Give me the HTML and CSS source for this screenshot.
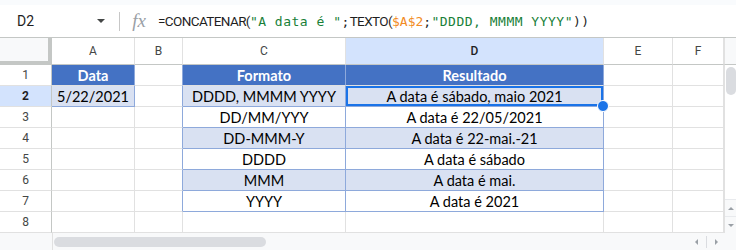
FILE: index.html
```html
<!DOCTYPE html>
<html lang="pt">

<head>
    <meta charset="UTF-8">
    <title>Planilha</title>
    <link rel="stylesheet" href="styles.css">
</head>

<body>
    <div class="topstrip"></div>
    <div class="fbar">
        <div class="namebox">
            <span>D2</span>
            <span class="caret"></span>
        </div>
        <div class="sep"></div>
        <div class="fx">fx</div>
        <div class="formula"><span class="fn">=CONCATENAR(</span><span class="str">"A data é "</span><span class="p">;</span><span class="fn">TEXTO(</span><span class="ref">$A$2</span><span class="p">;</span><span class="str">"DDDD, MMMM YYYY"</span><span class="p">))</span></div>
    </div>

    <div class="sheet">
        <!-- cabeçalho das colunas -->
        <div class="corner"></div>
        <div class="ch">A</div>
        <div class="ch">B</div>
        <div class="ch">C</div>
        <div class="ch ch-sel">D</div>
        <div class="ch">E</div>
        <div class="ch">F</div>
        <div class="vs-top"></div>

        <!-- barra de rolagem vertical -->
        <div class="vscroll">
            <div class="vthumb"></div>
            <div class="vbtn"><span class="tri up"></span></div>
            <div class="vbtn"><span class="tri down"></span></div>
        </div>

        <!-- linha 1 -->
        <div class="rh">1</div>
        <div class="c th tb-r">Data</div>
        <div class="c tb-r"></div>
        <div class="c th tb-r">Formato</div>
        <div class="c th tb-r">Resultado</div>
        <div class="c"></div>
        <div class="c"></div>

        <!-- linha 2 -->
        <div class="rh rh-sel">2</div>
        <div class="c alt tb-r tb-b">5/22/2021</div>
        <div class="c tb-r"></div>
        <div class="c alt tb-r tb-b">DDDD, MMMM YYYY</div>
        <div class="c alt tb-r tb-b sel">A data é sábado, maio 2021<span class="handle"></span></div>
        <div class="c"></div>
        <div class="c"></div>

        <!-- linha 3 -->
        <div class="rh">3</div>
        <div class="c"></div>
        <div class="c tb-r"></div>
        <div class="c tb-r tb-b">DD/MM/YYY</div>
        <div class="c tb-r tb-b">A data é 22/05/2021</div>
        <div class="c"></div>
        <div class="c"></div>

        <!-- linha 4 -->
        <div class="rh">4</div>
        <div class="c"></div>
        <div class="c tb-r"></div>
        <div class="c alt tb-r tb-b">DD-MMM-Y</div>
        <div class="c alt tb-r tb-b">A data é 22-mai.-21</div>
        <div class="c"></div>
        <div class="c"></div>

        <!-- linha 5 -->
        <div class="rh">5</div>
        <div class="c"></div>
        <div class="c tb-r"></div>
        <div class="c tb-r tb-b">DDDD</div>
        <div class="c tb-r tb-b">A data é sábado</div>
        <div class="c"></div>
        <div class="c"></div>

        <!-- linha 6 -->
        <div class="rh">6</div>
        <div class="c"></div>
        <div class="c tb-r"></div>
        <div class="c alt tb-r tb-b">MMM</div>
        <div class="c alt tb-r tb-b">A data é mai.</div>
        <div class="c"></div>
        <div class="c"></div>

        <!-- linha 7 -->
        <div class="rh">7</div>
        <div class="c"></div>
        <div class="c tb-r"></div>
        <div class="c tb-r tb-b">YYYY</div>
        <div class="c tb-r tb-b">A data é 2021</div>
        <div class="c"></div>
        <div class="c"></div>

        <!-- linha 8 -->
        <div class="rh">8</div>
        <div class="c"></div>
        <div class="c"></div>
        <div class="c"></div>
        <div class="c"></div>
        <div class="c"></div>
        <div class="c"></div>
    </div>

    <div class="hbar">
        <div class="hleft"></div>
        <div class="htrack"><div class="hthumb"></div></div>
        <div class="harrows">
            <div class="hbtn"><span class="tri left"></span></div>
            <div class="hbtn"><span class="tri right"></span></div>
        </div>
    </div>
</body>

</html>
```

FILE: styles.css
```css
body {
    margin: 0;
    width: 736px;
    height: 250px;
    overflow: hidden;
    background: #fff;
    font-family: Roboto, "Liberation Sans", sans-serif;
}

.topstrip {
    height: 5px;
    background: #f9fbfd;
}

/* barra de fórmulas */
.fbar {
    height: 32px;
    display: flex;
    align-items: center;
    border-bottom: 1px solid #c4c7c5;
    background: #fff;
}

.namebox {
    width: 111px;
    display: flex;
    align-items: center;
    justify-content: space-between;
    padding: 0 6px 0 17px;
    box-sizing: border-box;
    font-size: 14px;
    color: #1f1f1f;
}

.caret {
    width: 0;
    height: 0;
    border-left: 4px solid transparent;
    border-right: 4px solid transparent;
    border-top: 4px solid #444746;
}

.sep {
    width: 1px;
    height: 19px;
    background: #c7c7c7;
    margin-left: 8px;
}

.fx {
    width: 38px;
    text-align: center;
    font-family: "Liberation Serif", serif;
    font-style: italic;
    font-size: 19px;
    color: #9aa0a6;
}

.formula {
    font-size: 14px;
    color: #1f1f1f;
    white-space: nowrap;
}

.fn {
    font-family: Roboto, sans-serif;
    font-size: 13.5px;
    letter-spacing: -0.6px;
}

.p {
    font-family: "DejaVu Sans Mono", monospace;
    font-size: 13px;
    letter-spacing: 0.3px;
}

.str {
    font-family: "DejaVu Sans Mono", monospace;
    font-size: 13px;
    color: #188038;
    letter-spacing: 0.5px;
}

.ref {
    font-family: "DejaVu Sans Mono", monospace;
    font-size: 13px;
    color: #f28b24;
}

/* grade */
.sheet {
    position: relative;
    display: grid;
    grid-template-columns: 52px 83px 48px 163px 258px 69px 51px 12px;
    grid-template-rows: 27px repeat(8, 21px);
}

.corner {
    background: #f8f9fa;
    border-right: 4px solid #c4c7c5;
    border-bottom: 4px solid #c4c7c5;
}

.ch {
    display: flex;
    align-items: center;
    justify-content: center;
    font-size: 12px;
    color: #444746;
    border-right: 1px solid #e1e1e1;
    border-bottom: 1px solid #c4c7c5;
}

.ch-sel {
    background: #d3e3fd;
    color: #1f1f1f;
    font-weight: 500;
}

.rh {
    display: flex;
    align-items: center;
    justify-content: center;
    font-size: 12px;
    color: #444746;
    border-right: 1px solid #c4c7c5;
    border-bottom: 1px solid #e1e1e1;
}

.rh-sel {
    background: #d3e3fd;
    color: #1f1f1f;
    font-weight: bold;
}

.c {
    position: relative;
    display: flex;
    align-items: center;
    justify-content: center;
    font-family: Lato, "Liberation Sans", sans-serif;
    font-size: 14.5px;
    color: #000;
    white-space: nowrap;
    border-right: 1px solid #e1e1e1;
    border-bottom: 1px solid #e1e1e1;
}

.th {
    background: #4472c4;
    color: #fff;
    font-weight: bold;
}

.alt {
    background: #d9e1f2;
}

.tb-r {
    border-right-color: #8ea9db;
}

.tb-b {
    border-bottom-color: #8ea9db;
}

.sel {
    box-shadow: inset 0 0 0 2px #1a73e8;
}

.handle {
    position: absolute;
    right: -6px;
    bottom: -6px;
    width: 10px;
    height: 10px;
    border-radius: 50%;
    background: #1a73e8;
    border: 1px solid #fff;
    z-index: 2;
}

/* rolagem */
.vs-top {
    background: #f8f9fa;
    border-left: 1px solid #e1e1e1;
    border-bottom: 1px solid #c4c7c5;
}

.vscroll {
    grid-column: 8;
    grid-row: 2 / 10;
    display: flex;
    flex-direction: column;
    align-items: center;
    border-left: 1px solid #e1e1e1;
    background: #fff;
}

.vthumb {
    width: 10px;
    height: 28px;
    margin-top: 2px;
    margin-bottom: auto;
    border-radius: 5px;
    background: #dadce0;
}

.vbtn {
    width: 100%;
    height: 16px;
    display: flex;
    align-items: center;
    justify-content: center;
    background: #f8f9fa;
    border-top: 1px solid #e8eaed;
}

.tri {
    width: 0;
    height: 0;
}

.up {
    border-left: 3px solid transparent;
    border-right: 3px solid transparent;
    border-bottom: 3px solid #9aa0a6;
}

.down {
    border-left: 3px solid transparent;
    border-right: 3px solid transparent;
    border-top: 3px solid #9aa0a6;
}

.left {
    border-top: 3px solid transparent;
    border-bottom: 3px solid transparent;
    border-right: 3px solid #9aa0a6;
}

.right {
    border-top: 3px solid transparent;
    border-bottom: 3px solid transparent;
    border-left: 3px solid #9aa0a6;
}

.hbar {
    height: 17px;
    display: flex;
    background: #f8f9fa;
}

.hleft {
    width: 52px;
    border-right: 1px solid #e1e1e1;
}

.htrack {
    flex: 1;
    padding: 4px 0 0 1px;
}

.hthumb {
    width: 212px;
    height: 10px;
    border-radius: 5px;
    background: #dadce0;
}

.harrows {
    display: flex;
    align-items: center;
    margin-right: 10px;
}

.hbtn {
    width: 19px;
    height: 12px;
    display: flex;
    align-items: center;
    justify-content: center;
}

.hbtn + .hbtn {
    border-left: 1px solid #dadce0;
}
```
